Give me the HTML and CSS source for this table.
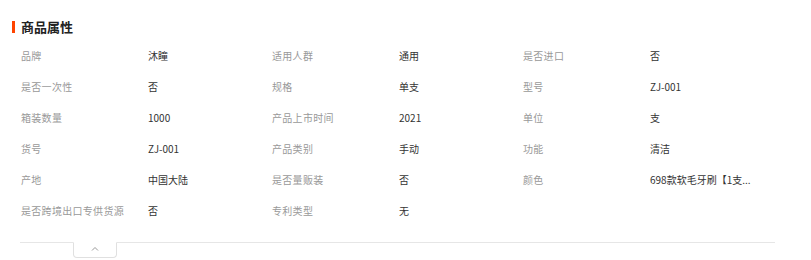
FILE: index.html
```html
<!DOCTYPE html>
<html lang="zh-CN">
<head>
<meta charset="utf-8">
<link rel="stylesheet" href="styles.css">
</head>
<body>
<section class="attrs">
  <h2 class="attrs-title">商品属性</h2>
  <div class="attrs-grid">
    <div class="k">品牌</div><div class="v">沐瞳</div>
    <div class="k">适用人群</div><div class="v">通用</div>
    <div class="k">是否进口</div><div class="v">否</div>
    <div class="k">是否一次性</div><div class="v">否</div>
    <div class="k">规格</div><div class="v">单支</div>
    <div class="k">型号</div><div class="v">ZJ-001</div>
    <div class="k">箱装数量</div><div class="v">1000</div>
    <div class="k">产品上市时间</div><div class="v">2021</div>
    <div class="k">单位</div><div class="v">支</div>
    <div class="k">货号</div><div class="v">ZJ-001</div>
    <div class="k">产品类别</div><div class="v">手动</div>
    <div class="k">功能</div><div class="v">清洁</div>
    <div class="k">产地</div><div class="v">中国大陆</div>
    <div class="k">是否量贩装</div><div class="v">否</div>
    <div class="k">颜色</div><div class="v" title="698款软毛牙刷【1支装】">698款软毛牙刷【1支...</div>
    <div class="k">是否跨境出口专供货源</div><div class="v">否</div>
    <div class="k">专利类型</div><div class="v">无</div>
  </div>
  <div class="attrs-foot">
    <button class="toggle" type="button">
      <svg width="8" height="5" viewBox="0 0 8 5"><path d="M1 4.5 L4 1.5 L7 4.5" fill="none" stroke="#999" stroke-width="1"/></svg>
    </button>
  </div>
</section>
</body>
</html>
```
FILE: styles.css
```css
* { box-sizing: border-box; }
html, body { margin: 0; padding: 0; background: #fff; }
body {
  font-family: "Noto Sans CJK SC", "Liberation Sans", sans-serif;
  width: 811px;
  height: 260px;
  overflow: hidden;
}
.attrs {
  padding: 18px 36px 0 21px;
}
.attrs-title {
  position: relative;
  margin: 0;
  font-size: 13px;
  line-height: 18px;
  height: 18px;
  font-weight: 700;
  color: #222;
}
.attrs-title::before {
  content: "";
  position: absolute;
  left: -9px;
  top: 3px;
  width: 3px;
  height: 12px;
  background: #ff4400;
}
.attrs-grid {
  margin-top: 4px;
  display: grid;
  grid-template-columns: 127px 124px 127px 124px 127px 124px;
  grid-auto-rows: 31px;
  font-size: 10px;
  align-items: center;
}
.k { color: #999; letter-spacing: 0.3px; }
.v { color: #333; min-width: 0; white-space: nowrap; }
.attrs-foot {
  margin-top: 16px;
  margin-left: -1px;
  border-top: 1px solid #e6e6e6;
  height: 20px;
}
.toggle {
  display: flex;
  align-items: center;
  justify-content: center;
  margin: -1px 0 0 53px;
  width: 44px;
  height: 16px;
  padding: 0 0 4px;
  border: 1px solid #e0e0e0;
  border-top: 1px solid #fff;
  border-radius: 0 0 4px 4px;
  background: #fff;
  cursor: pointer;
}
```
